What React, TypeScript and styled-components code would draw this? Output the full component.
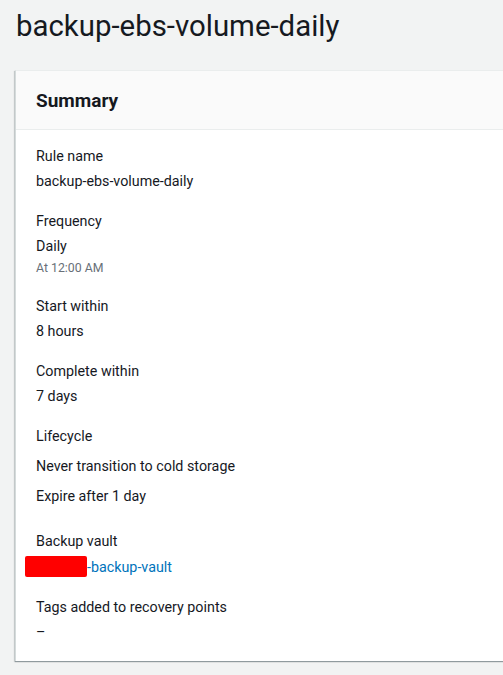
import styled, { createGlobalStyle } from "styled-components";

const GlobalStyle = createGlobalStyle`
  html, body {
    margin: 0;
    padding: 0;
    background-color: #f2f3f3;
    overflow: hidden;
  }
  body {
    font-family: Roboto, "Liberation Sans", Arial, sans-serif;
    color: #16191f;
    -webkit-font-smoothing: antialiased;
  }
`;

type Field = {
  label: string;
  values: string[];
  sub?: string;
  spaced?: boolean;
  link?: boolean;
};

const fields: Field[] = [
  { label: "Rule name", values: ["backup-ebs-volume-daily"] },
  { label: "Frequency", values: ["Daily"], sub: "At 12:00 AM" },
  { label: "Start within", values: ["8 hours"] },
  { label: "Complete within", values: ["7 days"] },
  {
    label: "Lifecycle",
    values: ["Never transition to cold storage", "Expire after 1 day"],
    spaced: true,
  },
  { label: "Backup vault", values: ["-backup-vault"], link: true },
  { label: "Tags added to recovery points", values: ["–"] },
];

export default function App() {
  return (
    <Page>
      <GlobalStyle />
      <Title>backup-ebs-volume-daily</Title>

      <Card>
        <CardHeader>
          <h2>Summary</h2>
        </CardHeader>

        <CardBody>
          {fields.map((field) => (
            <Group key={field.label} spaced={field.spaced}>
              <Label>{field.label}</Label>
              {field.values.map((value) =>
                field.link ? (
                  <Value key={value}>
                    <Redacted />
                    <VaultLink href="#">{value}</VaultLink>
                  </Value>
                ) : (
                  <Value key={value} spaced={field.spaced}>
                    {value}
                  </Value>
                )
              )}
              {field.sub && <Sub>{field.sub}</Sub>}
            </Group>
          ))}
        </CardBody>
      </Card>
    </Page>
  );
}

const Page = styled.div`
  padding: 8px 0 0 16px;
  min-height: 100vh;
  box-sizing: border-box;
`;

const Title = styled.h1`
  margin: 0;
  font-size: 29.4px;
  line-height: 36px;
  font-weight: 400;
  color: #16191f;
`;

const Card = styled.section`
  margin-top: 26px;
  margin-left: -1px;
  width: 560px;
  background-color: #ffffff;
  border-top: 1px solid #eaeded;
  border-left: 1px solid #d5dbdb;
  box-shadow: 0 1px 1px 0 rgba(0, 28, 36, 0.3),
    -1px 1px 1px 0 rgba(0, 28, 36, 0.15);
`;

const CardHeader = styled.div`
  display: flex;
  align-items: center;
  height: 58px;
  padding: 0 20px;
  background-color: #fafafa;
  border-bottom: 1px solid #eaeded;

  > h2 {
    margin: 1px 0 0;
    font-size: 19px;
    font-weight: 700;
    line-height: 22px;
  }
`;

const CardBody = styled.div`
  padding: 16px 20px 19px;
`;

const Group = styled.div<{ spaced?: boolean }>`
  margin-bottom: ${(p) => (p.spaced ? "25px" : "20px")};

  &:last-child {
    margin-bottom: 0;
  }
`;

const Label = styled.div`
  font-size: 14.3px;
  line-height: 20px;
`;

const Value = styled.div<{ spaced?: boolean }>`
  display: flex;
  align-items: center;
  margin-top: ${(p) => (p.spaced ? "10px" : "5px")};
  font-size: 14.3px;
  line-height: 20px;
`;

const Sub = styled.div`
  margin-top: 2px;
  margin-bottom: -2px;
  font-size: 12.3px;
  line-height: 20px;
  color: #687078;
`;

const Redacted = styled.span`
  display: inline-block;
  width: 62px;
  height: 21px;
  margin-left: -11px;
  border-radius: 2px;
  background-color: #ff0000;
`;

const VaultLink = styled.a`
  color: #0073bb;
  text-decoration: none;
`;
